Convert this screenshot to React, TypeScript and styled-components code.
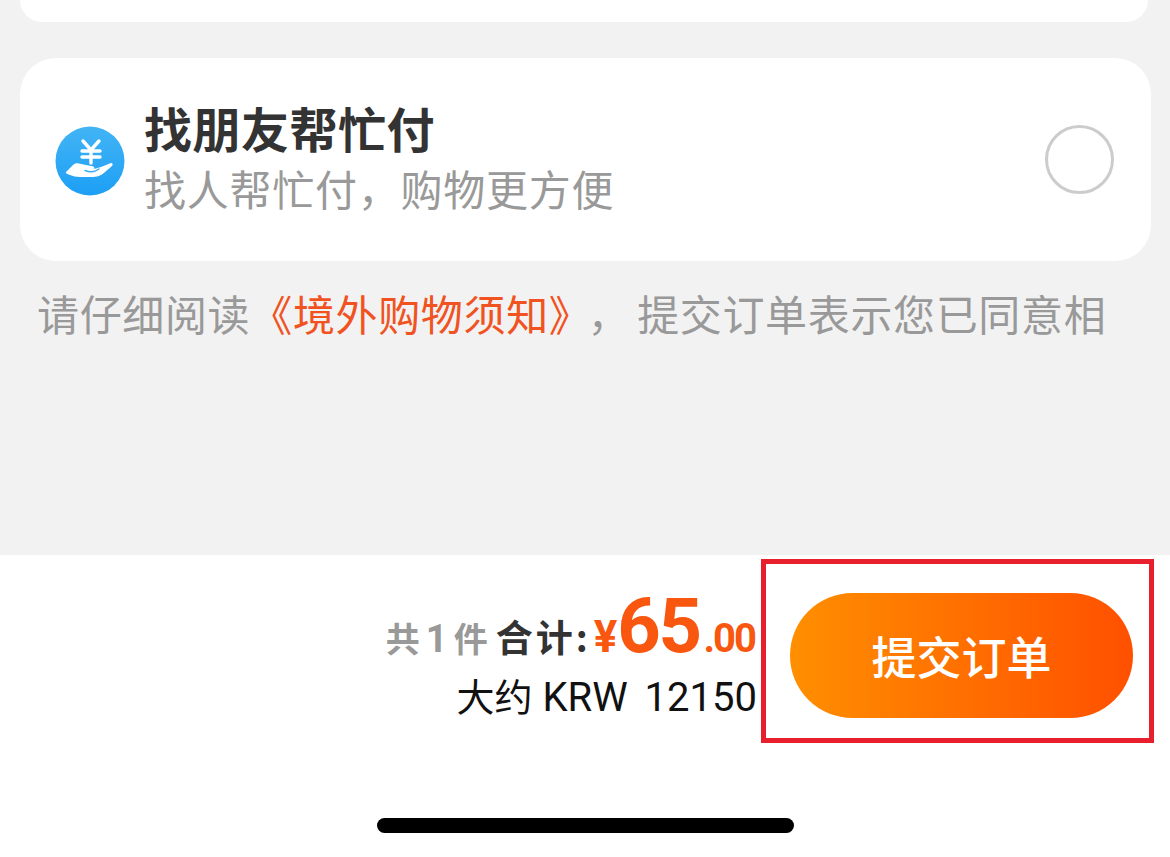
import React from "react";
import styled, { createGlobalStyle } from "styled-components";

const GlobalStyle = createGlobalStyle`
  html, body {
    margin: 0;
    padding: 0;
    background: #f2f2f2;
    font-family: "Noto Sans CJK SC", "Noto Sans", sans-serif;
  }
`;

const Page = styled.div`
  width: 1170px;
  height: 857px;
  display: flex;
  flex-direction: column;
  overflow: hidden;
  background: #f2f2f2;
`;

const Content = styled.div`
  height: 555px;
  padding: 0 20px;
  box-sizing: border-box;
`;

const PrevCard = styled.div`
  height: 22px;
  margin-right: 2px;
  background: #fff;
  border-radius: 0 0 30px 30px;
`;

const PayCard = styled.div`
  height: 203px;
  margin-top: 36px;
  margin-right: -1px;
  padding: 0 37px 0 35px;
  box-sizing: border-box;
  display: flex;
  align-items: center;
  background: #fff;
  border-radius: 36px;
`;

const PayIcon = styled.svg`
  width: 70px;
  height: 70px;
  flex: none;
  margin-top: 2px;
`;

const PayText = styled.div`
  flex: 1;
  margin-left: 19px;
  display: flex;
  flex-direction: column;
`;

const PayTitle = styled.div`
  font-size: 48px;
  line-height: 58px;
  font-weight: 700;
  letter-spacing: 0.5px;
  margin-top: -4px;
  color: #333;
`;

const PaySub = styled.div`
  font-size: 42px;
  line-height: 58px;
  margin-top: 3px;
  letter-spacing: 0.75px;
  color: #999;
`;

const Radio = styled.div`
  width: 69px;
  height: 69px;
  box-sizing: border-box;
  flex: none;
  border: 3px solid #ccc;
  border-radius: 50%;
`;

const Notice = styled.div`
  margin: 26px 0 0 17px;
  font-size: 42px;
  line-height: 52px;
  letter-spacing: 0.65px;
  white-space: nowrap;
  color: #999;
`;

const NoticeLink = styled.span`
  color: #f0531f;
`;

const NoticeComma = styled.span`
  margin: 0 7px 0 17px;
`;

const Footer = styled.div`
  flex: 1;
  position: relative;
  background: #fff;
  display: flex;
  justify-content: flex-end;
  align-items: flex-start;
  padding: 4px 16px 0 0;
`;

const Summary = styled.div`
  display: flex;
  flex-direction: column;
  align-items: flex-end;
  margin-top: 22px;
  margin-right: 4px;
`;

const TotalRow = styled.div`
  display: flex;
  align-items: baseline;
  height: 72px;
  margin-right: 2px;
  white-space: nowrap;
`;

const Count = styled.span`
  font-size: 34px;
  font-weight: 700;
  color: #999;
  margin-right: 8px;
`;

const CountNum = styled.span`
  font-family: Roboto, "Liberation Sans", sans-serif;
  font-size: 38px;
  margin: 0 6px;
`;

const TotalLabel = styled.span`
  font-size: 37px;
  font-weight: 700;
  letter-spacing: 3px;
  color: #333;
  margin-right: 3px;
`;

const Price = styled.span<{ $size: number; $track?: number; $gap?: number }>`
  font-family: Roboto, "Liberation Sans", sans-serif;
  font-size: ${(p) => p.$size}px;
  letter-spacing: ${(p) => p.$track ?? 0}px;
  margin-left: ${(p) => p.$gap ?? 0}px;
  font-weight: 700;
  color: #f9560f;
`;

const Converted = styled.div`
  font-size: 38px;
  line-height: 50px;
  color: #111;
  white-space: nowrap;
  margin-top: 17px;
`;

const ConvertedNum = styled.span`
  font-family: Roboto, "Liberation Sans", sans-serif;
  font-size: 40px;
  word-spacing: 7px;
  margin-left: 10px;
`;

const Highlight = styled.div`
  width: 393px;
  height: 184px;
  box-sizing: border-box;
  border: 5px solid #e8202e;
  display: flex;
  align-items: center;
  justify-content: flex-start;
  padding: 9px 0 0 24px;
`;

const SubmitButton = styled.button`
  width: 343px;
  height: 125px;
  border: none;
  padding: 0;
  border-radius: 63px;
  background: linear-gradient(90deg, #ff8f00, #ff5000);
  color: #fff;
  font-family: inherit;
  font-size: 45px;
  font-weight: 500;
`;

const HomeBar = styled.div`
  position: absolute;
  left: 377px;
  top: 263px;
  width: 417px;
  height: 15px;
  border-radius: 8px;
  background: #000;
`;

const App: React.FC = () => {
  return (
    <Page>
      <GlobalStyle />
      <Content>
        <PrevCard />
        <PayCard>
          <PayIcon viewBox="0 0 70 70">
            <defs>
              <linearGradient id="payBlue" x1="0" y1="0" x2="0" y2="1">
                <stop offset="0" stopColor="#42b4f5" />
                <stop offset="1" stopColor="#1d9ff5" />
              </linearGradient>
            </defs>
            <circle cx="35" cy="35" r="34.5" fill="url(#payBlue)" />
            <path
              d="M28 15l8 9 8-9M27 25h18M27 31h18M36 24v13"
              fill="none"
              stroke="#fff"
              strokeWidth="3.4"
              strokeLinecap="round"
            />
            <path
              d="M11 46L18 39C20 37 23 37 26 38L36 40C39 40 40 42 39 43L46 41L56 37C58 37 58 39 57 40L50 46C46 50 42 51 36 51L25 51C21 51 18 50 15 49C12 48 10 47 11 46Z"
              fill="#fff"
            />
            <path d="M30 44.5c5 2 10 1.5 14-1.5" fill="none" stroke="#3aaaf5" strokeWidth="1.4" strokeLinecap="round" />
          </PayIcon>
          <PayText>
            <PayTitle>找朋友帮忙付</PayTitle>
            <PaySub>找人帮忙付，购物更方便</PaySub>
          </PayText>
          <Radio />
        </PayCard>
        <Notice>
          请仔细阅读<NoticeLink>《境外购物须知》</NoticeLink>
          <NoticeComma>，</NoticeComma>提交订单表示您已同意相
        </Notice>
      </Content>
      <Footer>
        <Summary>
          <TotalRow>
            <Count>
              共<CountNum>1</CountNum>件
            </Count>
            <TotalLabel>合计:</TotalLabel>
            <Price $size={44}>¥</Price>
            <Price $size={76} $track={-2.5}>65</Price>
            <Price $size={40} $track={-2} $gap={4}>.00</Price>
          </TotalRow>
          <Converted>
            大约<ConvertedNum>KRW 12150</ConvertedNum>
          </Converted>
        </Summary>
        <Highlight>
          <SubmitButton>提交订单</SubmitButton>
        </Highlight>
        <HomeBar />
      </Footer>
    </Page>
  );
};

export default App;
